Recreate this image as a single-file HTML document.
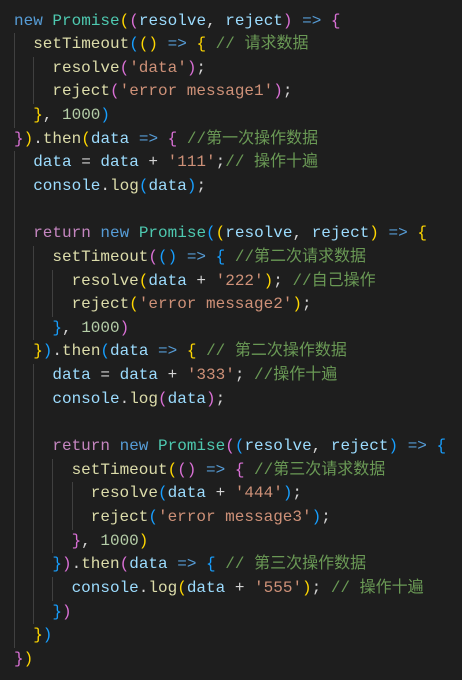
<!DOCTYPE html>
<html><head><meta charset="utf-8"><style>
html,body{margin:0;padding:0;background:#1e1e1e;width:462px;height:680px;overflow:hidden}
.c{position:absolute;left:14px;top:9.5px;font-family:"Liberation Mono","Noto Sans CJK SC",monospace;font-size:16px;line-height:23.65px;color:#d4d4d4}
.l{height:23.65px;white-space:pre}
i{font-style:normal;display:inline-block;width:19.2px;box-shadow:inset 1px 0 0 #404040;height:23.65px;vertical-align:top}
.k{color:#569cd6}.t{color:#4ec9b0}.v{color:#9cdcfe}.f{color:#dcdcaa}.s{color:#ce9178}.n{color:#b5cea8}.m{color:#6a9955}.r{color:#c586c0}
.g{color:#ffd700}.o{color:#da70d6}.b{color:#179fff}
</style></head><body><div class="c">
<div class="l"><span class="k">new</span> <span class="t">Promise</span><span class="g">(</span><span class="o">(</span><span class="v">resolve</span>, <span class="v">reject</span><span class="o">)</span> <span class="k">=&gt;</span> <span class="o">{</span></div>
<div class="l"><i></i><span class="f">setTimeout</span><span class="b">(</span><span class="g">()</span> <span class="k">=&gt;</span> <span class="g">{</span> <span class="m">// 请求数据</span></div>
<div class="l"><i></i><i></i><span class="f">resolve</span><span class="o">(</span><span class="s">'data'</span><span class="o">)</span>;</div>
<div class="l"><i></i><i></i><span class="f">reject</span><span class="o">(</span><span class="s">'error message1'</span><span class="o">)</span>;</div>
<div class="l"><i></i><span class="g">}</span>, <span class="n">1000</span><span class="b">)</span></div>
<div class="l"><span class="o">}</span><span class="g">)</span>.<span class="f">then</span><span class="g">(</span><span class="v">data</span> <span class="k">=&gt;</span> <span class="o">{</span> <span class="m">//第一次操作数据</span></div>
<div class="l"><i></i><span class="v">data</span> = <span class="v">data</span> + <span class="s">'111'</span>;<span class="m">// 操作十遍</span></div>
<div class="l"><i></i><span class="v">console</span>.<span class="f">log</span><span class="b">(</span><span class="v">data</span><span class="b">)</span>;</div>
<div class="l"><i></i></div>
<div class="l"><i></i><span class="r">return</span> <span class="k">new</span> <span class="t">Promise</span><span class="b">(</span><span class="g">(</span><span class="v">resolve</span>, <span class="v">reject</span><span class="g">)</span> <span class="k">=&gt;</span> <span class="g">{</span></div>
<div class="l"><i></i><i></i><span class="f">setTimeout</span><span class="o">(</span><span class="b">()</span> <span class="k">=&gt;</span> <span class="b">{</span> <span class="m">//第二次请求数据</span></div>
<div class="l"><i></i><i></i><i></i><span class="f">resolve</span><span class="g">(</span><span class="v">data</span> + <span class="s">'222'</span><span class="g">)</span>; <span class="m">//自己操作</span></div>
<div class="l"><i></i><i></i><i></i><span class="f">reject</span><span class="g">(</span><span class="s">'error message2'</span><span class="g">)</span>;</div>
<div class="l"><i></i><i></i><span class="b">}</span>, <span class="n">1000</span><span class="o">)</span></div>
<div class="l"><i></i><span class="g">}</span><span class="b">)</span>.<span class="f">then</span><span class="b">(</span><span class="v">data</span> <span class="k">=&gt;</span> <span class="g">{</span> <span class="m">// 第二次操作数据</span></div>
<div class="l"><i></i><i></i><span class="v">data</span> = <span class="v">data</span> + <span class="s">'333'</span>; <span class="m">//操作十遍</span></div>
<div class="l"><i></i><i></i><span class="v">console</span>.<span class="f">log</span><span class="o">(</span><span class="v">data</span><span class="o">)</span>;</div>
<div class="l"><i></i><i></i></div>
<div class="l"><i></i><i></i><span class="r">return</span> <span class="k">new</span> <span class="t">Promise</span><span class="o">(</span><span class="b">(</span><span class="v">resolve</span>, <span class="v">reject</span><span class="b">)</span> <span class="k">=&gt;</span> <span class="b">{</span></div>
<div class="l"><i></i><i></i><i></i><span class="f">setTimeout</span><span class="g">(</span><span class="o">()</span> <span class="k">=&gt;</span> <span class="o">{</span> <span class="m">//第三次请求数据</span></div>
<div class="l"><i></i><i></i><i></i><i></i><span class="f">resolve</span><span class="b">(</span><span class="v">data</span> + <span class="s">'444'</span><span class="b">)</span>;</div>
<div class="l"><i></i><i></i><i></i><i></i><span class="f">reject</span><span class="b">(</span><span class="s">'error message3'</span><span class="b">)</span>;</div>
<div class="l"><i></i><i></i><i></i><span class="o">}</span>, <span class="n">1000</span><span class="g">)</span></div>
<div class="l"><i></i><i></i><span class="b">}</span><span class="o">)</span>.<span class="f">then</span><span class="o">(</span><span class="v">data</span> <span class="k">=&gt;</span> <span class="b">{</span> <span class="m">// 第三次操作数据</span></div>
<div class="l"><i></i><i></i><i></i><span class="v">console</span>.<span class="f">log</span><span class="g">(</span><span class="v">data</span> + <span class="s">'555'</span><span class="g">)</span>; <span class="m">// 操作十遍</span></div>
<div class="l"><i></i><i></i><span class="b">}</span><span class="o">)</span></div>
<div class="l"><i></i><span class="g">}</span><span class="b">)</span></div>
<div class="l"><span class="o">}</span><span class="g">)</span></div>
</div></body></html>
